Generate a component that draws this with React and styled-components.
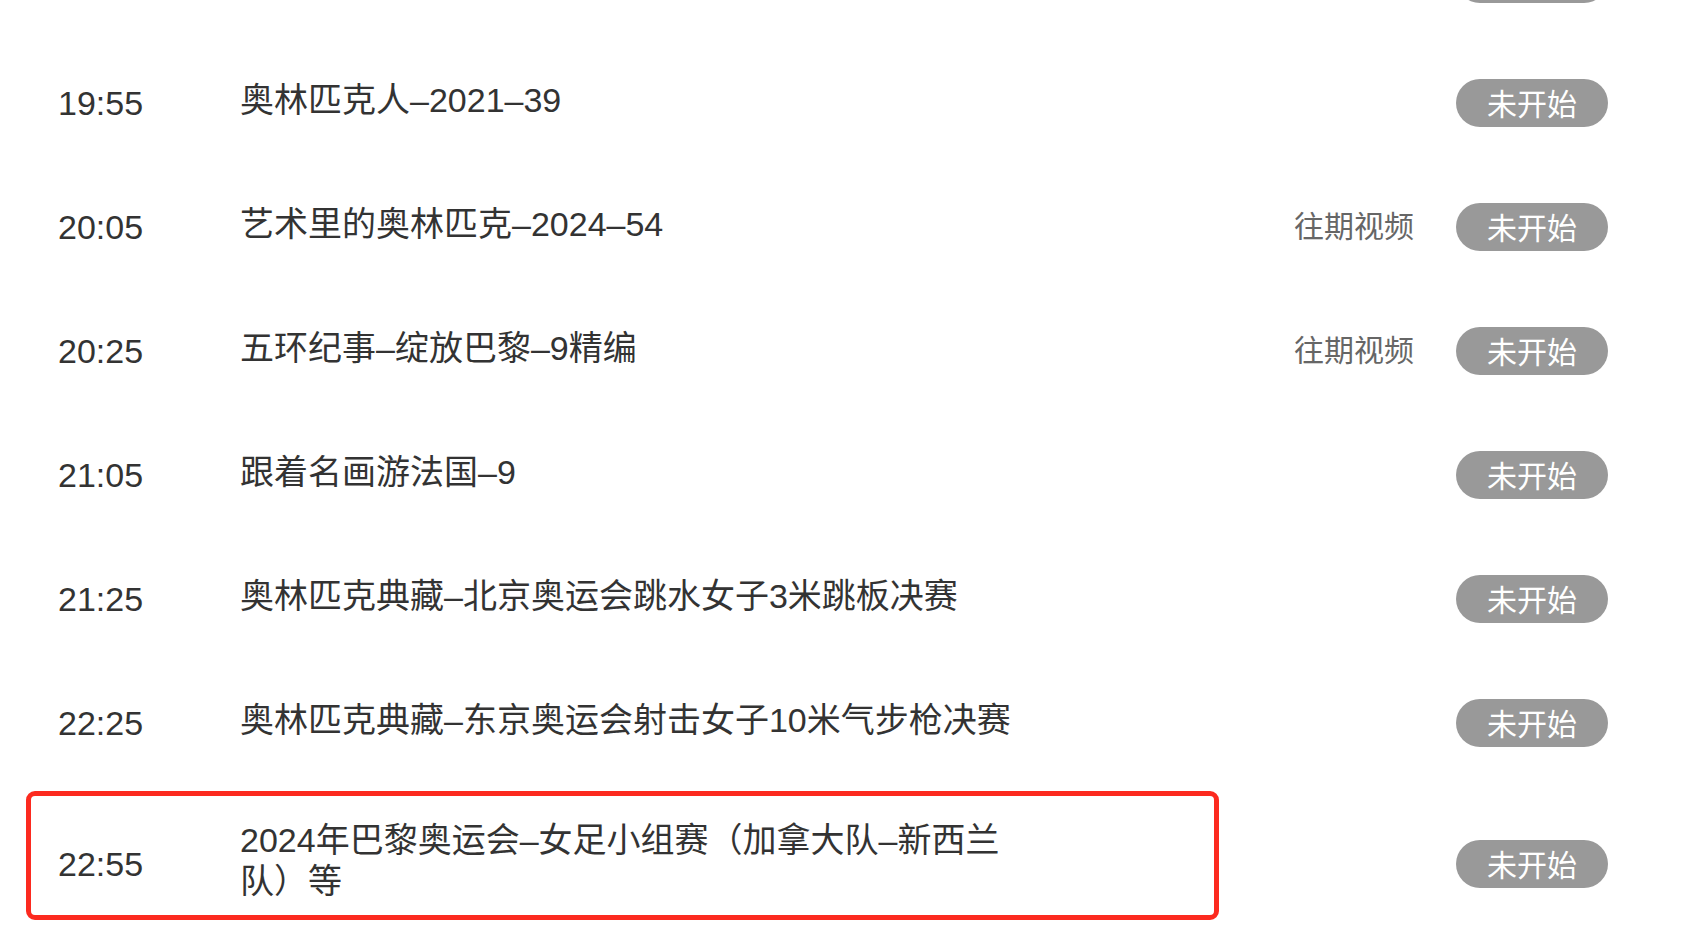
import React from 'react';
import styled, { createGlobalStyle } from 'styled-components';

const GlobalStyle = createGlobalStyle`
  html, body {
    margin: 0;
    padding: 0;
    background: #fff;
    overflow: hidden;
  }
  body {
    font-family: "Liberation Sans", "Noto Sans CJK SC", sans-serif;
    color: #333;
  }
`

const Page = styled.div`
  width: 1700px;
  height: 946px;
  overflow: hidden;
  background: #fff;
`

// the list is scrolled: only the bottom edge of the previous row's pill shows
const List = styled.div`
  margin-top: -83px;
  display: flex;
  flex-direction: column;
`

const Row = styled.div`
  position: relative;
  display: flex;
  align-items: center;
  padding: 38px 92px 38px 58px;
`

const Time = styled.div`
  flex-shrink: 0;
  width: 182px;
  font-size: 34px;
  line-height: 41px;
  color: #333;
`

const Title = styled.div`
  flex-shrink: 0;
  width: 782px;
  font-size: 34px;
  line-height: 41px;
  color: #333;
  position: relative;
  top: -3px;
`

const Actions = styled.div`
  margin-left: auto;
  display: flex;
  align-items: center;
  gap: 42px;
`

const Replay = styled.span`
  font-size: 30px;
  line-height: 36px;
  color: #666;
  font-family: "Noto Sans CJK SC", sans-serif;
  position: relative;
  top: -3px;
`

const StatusButton = styled.div`
  width: 152px;
  height: 48px;
  box-sizing: border-box;
  padding-bottom: 3px;
  border-radius: 24px;
  background: #999;
  color: #fff;
  font-size: 30px;
  font-family: "Noto Sans CJK SC", sans-serif;
  display: flex;
  align-items: center;
  justify-content: center;
`

// red annotation frame drawn over the row
const Highlight = styled.div`
  position: absolute;
  left: 26px;
  top: 6px;
  width: 1193px;
  height: 129px;
  box-sizing: border-box;
  border: 5px solid #fc2a1f;
  border-radius: 9px;
  pointer-events: none;
`

const programs = [
  { id: 'prev', time: '', title: '', status: '' },
  { id: 1, time: '19:55', title: '奥林匹克人–2021–39', status: '未开始' },
  { id: 2, time: '20:05', title: '艺术里的奥林匹克–2024–54', status: '未开始', replay: true },
  { id: 3, time: '20:25', title: '五环纪事–绽放巴黎–9精编', status: '未开始', replay: true },
  { id: 4, time: '21:05', title: '跟着名画游法国–9', status: '未开始' },
  { id: 5, time: '21:25', title: '奥林匹克典藏–北京奥运会跳水女子3米跳板决赛', status: '未开始' },
  { id: 6, time: '22:25', title: '奥林匹克典藏–东京奥运会射击女子10米气步枪决赛', status: '未开始' },
  { id: 7, time: '22:55', title: '2024年巴黎奥运会–女足小组赛（加拿大队–新西兰队）等', status: '未开始', marked: true },
];

export default function App() {
  return (
    <Page>
      <GlobalStyle />
      <List>
        {programs.map(p => (
          <Row key={p.id}>
            <Time>{p.time}</Time>
            <Title>{p.title}</Title>
            <Actions>
              {p.replay && <Replay>往期视频</Replay>}
              <StatusButton>{p.status}</StatusButton>
            </Actions>
            {p.marked && <Highlight />}
          </Row>
        ))}
      </List>
    </Page>
  );
}
